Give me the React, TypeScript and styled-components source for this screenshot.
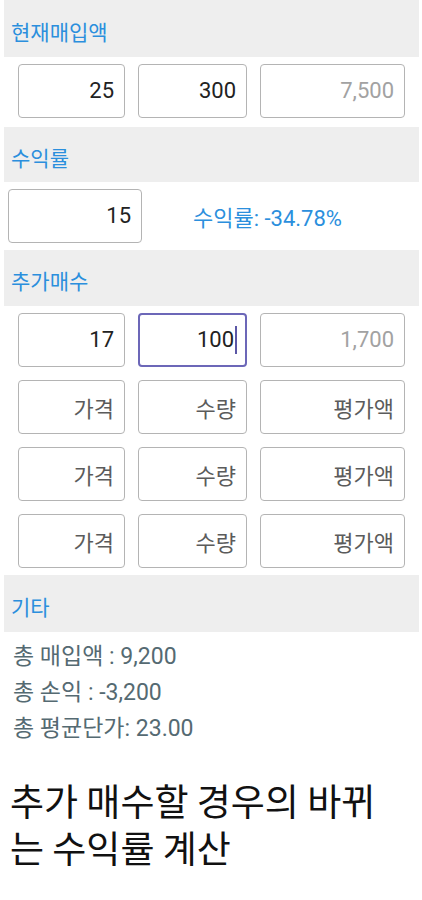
import React from "react";
import styled, { createGlobalStyle } from "styled-components";

const GlobalStyle = createGlobalStyle`
  html, body {
    margin: 0;
    padding: 0;
    background: #ffffff;
  }
  body {
    font-family: Roboto, "Noto Sans CJK KR", "Noto Sans", sans-serif;
    -webkit-font-smoothing: antialiased;
  }
  * { box-sizing: border-box; }
`;

const Page = styled.div`
  width: 422px;
  padding: 0 3px 0 4px;
  display: flex;
  flex-direction: column;
`;

const Section = styled.section<{ $after?: number }>`
  display: flex;
  flex-direction: column;
  margin-bottom: ${(p) => p.$after ?? 2}px;
`;

const Band = styled.div<{ $h?: number }>`
  height: ${(p) => p.$h ?? 56}px;
  background: #eeeeee;
  display: flex;
  align-items: center;
  padding: 4px 0 0 7px;
  color: #2b8fdd;
  font-size: 21px;
`;

const FieldRow = styled.div`
  height: 67px;
  display: grid;
  grid-template-columns: 107px 109px 1fr;
  column-gap: 13px;
  align-items: center;
  padding: 0 14px;
`;

const RateRow = styled.div`
  height: 67px;
  display: flex;
  align-items: center;
  padding-left: 4px;
  gap: 51px;
`;

const Field = styled.div<{ $tone?: "value" | "muted" | "hint"; $focused?: boolean; $w?: number }>`
  height: 54px;
  width: ${(p) => (p.$w ? `${p.$w}px` : "auto")};
  display: flex;
  align-items: center;
  justify-content: flex-end;
  padding-right: ${(p) => (p.$focused ? "8px" : "10px")};
  border: ${(p) => (p.$focused ? "2px solid #6c67b8" : "1px solid #b4b4b4")};
  border-radius: 4px;
  background: #ffffff;
  font-size: 22px;
  color: ${(p) =>
    p.$tone === "muted" ? "#a2a2a2" : p.$tone === "hint" ? "#5b5b5b" : "#222222"};
`;

const Caret = styled.span`
  display: inline-block;
  width: 2px;
  height: 28px;
  margin-left: 1px;
  background: #5b57a6;
`;

const RateText = styled.div`
  color: #2b8fdd;
  font-size: 22px;
`;

const Summary = styled.div`
  display: flex;
  flex-direction: column;
  padding: 7px 0 0 9px;
  color: #556a72;
  font-size: 23px;
  line-height: 36px;
`;

const Headline = styled.h1`
  margin: 28px 0 0 0;
  padding: 0 0 0 6px;
  width: 378px;
  font-family: "Noto Sans CJK KR", sans-serif;
  font-weight: 400;
  font-size: 37px;
  line-height: 47px;
  color: #111111;
  word-break: break-all;
`;

type Cell = { text: string; tone?: "value" | "muted" | "hint"; focused?: boolean };

const Row = ({ cells }: { cells: Cell[] }) => (
  <FieldRow>
    {cells.map((c, i) => (
      <Field key={i} $tone={c.tone} $focused={c.focused}>
        {c.text}
        {c.focused && <Caret />}
      </Field>
    ))}
  </FieldRow>
);

const emptyRow: Cell[] = [
  { text: "가격", tone: "hint" },
  { text: "수량", tone: "hint" },
  { text: "평가액", tone: "hint" },
];

export default function App() {
  return (
    <>
      <GlobalStyle />
      <Page>
        <Section $after={3}>
          <Band $h={57}>현재매입액</Band>
          <Row
            cells={[
              { text: "25" },
              { text: "300" },
              { text: "7,500", tone: "muted" },
            ]}
          />
        </Section>
        <Section $after={1}>
          <Band $h={55}>수익률</Band>
          <RateRow>
            <Field $w={134}>15</Field>
            <RateText>수익률: -34.78%</RateText>
          </RateRow>
        </Section>
        <Section $after={1}>
          <Band>추가매수</Band>
          <Row
            cells={[
              { text: "17" },
              { text: "100", focused: true },
              { text: "1,700", tone: "muted" },
            ]}
          />
          <Row cells={emptyRow} />
          <Row cells={emptyRow} />
          <Row cells={emptyRow} />
        </Section>
        <Section>
          <Band $h={57}>기타</Band>
          <Summary>
            <span>총 매입액 : 9,200</span>
            <span>총 손익 : -3,200</span>
            <span>총 평균단가: 23.00</span>
          </Summary>
        </Section>
        <Headline>추가 매수할 경우의 바뀌는 수익률 계산</Headline>
      </Page>
    </>
  );
}
